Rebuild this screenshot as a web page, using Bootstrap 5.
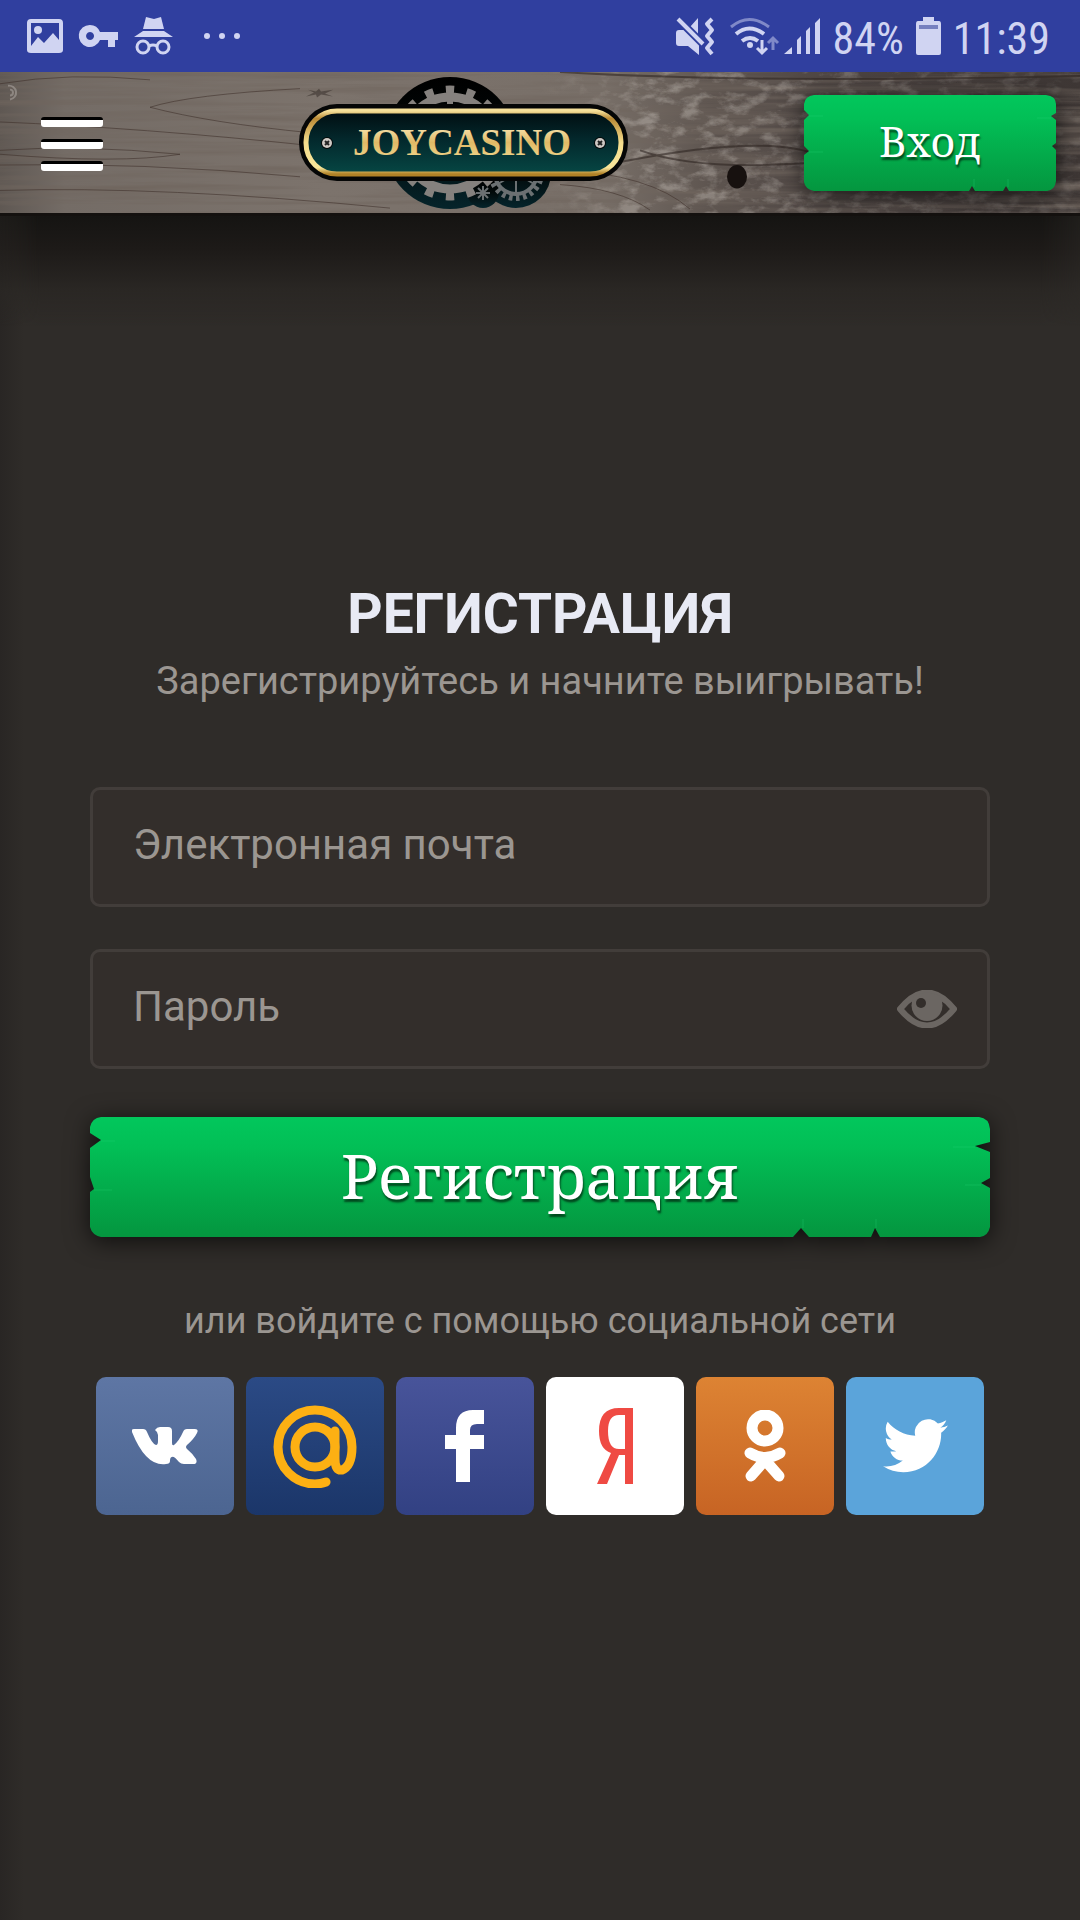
<!DOCTYPE html>
<html lang="ru">
<head>
<meta charset="utf-8">
<title>Joycasino</title>
<meta name="viewport" content="width=device-width, initial-scale=1">
<link rel="stylesheet" href="https://cdn.jsdelivr.net/npm/bootstrap@5.3.0/dist/css/bootstrap.min.css">
<script src="https://cdn.jsdelivr.net/npm/bootstrap@5.3.0/dist/js/bootstrap.bundle.min.js"></script>
<style>
body{background:linear-gradient(90deg,#292624 0,#2f2c29 24px);font-family:Roboto,"Noto Sans",sans-serif;color:#9b9691;min-height:100vh}
svg{display:block;flex:none}
.status-bar{background:#303f9f;height:72px;padding:0 30px 0 26px;color:#d0d4f2;font:44px/66px "Roboto Condensed",Roboto,sans-serif}
.status-right{gap:12px}
.status-text{padding-top:6px}
.top-bar{height:144px;padding:0 24px 0 41px;border-bottom:3px solid #14110f;isolation:isolate}
.wood{position:absolute;inset:0;width:100%;height:100%;z-index:-1}
.under-shade{height:110px;background:linear-gradient(#151412,#1d1a18 30%,#2a2724 68%,rgba(47,44,41,0));-webkit-mask-image:linear-gradient(90deg,rgba(0,0,0,.6),#000 40px calc(100% - 40px),rgba(0,0,0,.6))}
.menu-btn{width:82px;height:56px;border:0;background:none;padding:2px 0 0;display:flex;flex-direction:column;justify-content:space-between}
.menu-bar{width:62px;height:10px;border-top:3px solid #000;border-radius:3px;background:#fff}
.plank{display:block;position:relative;border:0;padding:0 0 4px;color:#fff;background:none;font-family:"Noto Serif","DejaVu Serif",serif;text-shadow:1px 3px 2px rgba(0,50,20,.8);isolation:isolate}
.plank svg{position:absolute;inset:0;width:100%;height:100%;z-index:-1;overflow:visible;filter:drop-shadow(0 4px 12px rgba(0,0,0,.7))}
.login-btn{width:252px;height:96px;font-size:42px}
.register-btn{height:120px;font-size:62px;margin-top:48px}
.reg-area{padding:255px 90px 0}
.reg-title{font-size:55px;line-height:66px;font-weight:700;color:#e8eaf4;margin:0}
.reg-sub{font-size:38px;line-height:48px;margin:10px 0 82px}
.field-wrap{position:relative;font-size:42px;line-height:56px}
.field-wrap + .field-wrap{margin-top:42px}
.field-box{height:120px;font-size:inherit;line-height:inherit;background:#332e2b;border:3px solid #423d3a;border-radius:10px;padding:0 40px;color:#c9c5c1}
.field-box:focus{background:#332e2b;color:#fff;border-color:#69635e;box-shadow:none}
.field-label{position:absolute;left:43px;top:30px;pointer-events:none}
.field-box:not(:placeholder-shown) + .field-label{display:none}
.eye-btn{position:absolute;right:33px;top:41px;border:0;background:none;padding:0}
.social-note{font-size:36px;line-height:48px;margin:60px 0 32px}
.social-row{gap:12px;padding:0 6px}
.social-tile{flex:1;aspect-ratio:1;border-radius:10px;display:flex;align-items:center;justify-content:center}
.tile-vk{background:linear-gradient(#5e76a4,#4c6591)}
.tile-mail{background:linear-gradient(#2b4a85,#1b3669)}
.tile-fb{background:linear-gradient(#48549a,#324183)}
.tile-ya{background:#fff}
.tile-ok{background:linear-gradient(#dd8333,#c76424)}
.tile-tw{background:#5ba4da}
</style>
</head>
<body>
<div class="status-bar d-flex align-items-center justify-content-between">
  <svg width="216" height="42" viewBox="0 0 216 42" fill="#d0d4f2" aria-hidden="true">
    <path fill-rule="evenodd" d="M5 4h28q4 0 4 4v27q0 3-4 3H5q-4 0-4-3V8q0-4 4-4zM5 8v23l7-9 6 6 9-10 6 7V8z"/>
    <circle cx="12" cy="15" r="4"/>
    <path fill-rule="evenodd" d="M64 10a11 11 0 0 1 10 7h18v8h-3v7h-7v-7h-8a11 11 0 1 1-10-15zm0 7a4 4 0 1 0 .1 0z"/>
    <path d="M120 2l8 2 7-2 3 12h-21zM117 16h21l9 6h-39z"/>
    <g fill="none" stroke="#d0d4f2" stroke-width="3"><circle cx="117" cy="32" r="6"/><circle cx="137" cy="32" r="6"/><path d="M123 31q4-2 8 0"/></g>
    <circle cx="181" cy="21" r="3"/><circle cx="196" cy="21" r="3"/><circle cx="211" cy="21" r="3"/>
  </svg>
  <div class="status-right d-flex align-items-center">
    <svg width="146" height="42" viewBox="0 0 146 42" aria-hidden="true" fill="#d0d4f2">
      <path d="M1 18q0-3 3-3h5L24 29v11l-11-9H4q-3 0-3-3zM23 3v17l-8-8z"/>
      <path d="M3 4l25 25" stroke="#303f9f" stroke-width="8"/>
      <path d="M3 4l25 25" stroke="#d0d4f2" stroke-width="4"/>
      <path d="M37 4L32 9l5 6-5 6 5 6-5 6 5 6" fill="none" stroke="#d0d4f2" stroke-width="4" stroke-linejoin="round"/>
      <g fill="none" stroke="#d0d4f2" stroke-width="4"><path d="M56 12q18-15 38 0" stroke-opacity=".5" stroke-width="3"/><path d="M61 19q13-11 28 0"/><path d="M67 26q8-6 16 0"/></g>
      <circle cx="75" cy="30" r="3"/>
      <path d="M87 25v13M82 33l5 5 5-5" fill="none" stroke="#d0d4f2" stroke-width="3"/>
      <path d="M98 35V23M93 28l5-5 5 5" fill="none" stroke="#d0d4f2" stroke-opacity=".5" stroke-width="3"/>
      <path d="M109 39l8-7v7zM122 39V25l4-4v18zM131 39V16l4-4v27zM140 39V8l5-5v36z"/>
    </svg>
    <span class="status-text">84%</span>
    <svg width="25" height="38" viewBox="0 0 25 38" aria-hidden="true"><path fill="#d0d4f2" d="M7 0h11v4h5q2 0 2 3v29q0 2-2 2H2q-2 0-2-2V7q0-3 2-3h5z"/><path fill="#7680bf" d="M3 8h19v4H3z"/></svg>
    <span class="status-text">11:39</span>
  </div>
</div>

<header class="top-bar position-relative d-flex align-items-center justify-content-between">
  <svg class="wood" viewBox="0 0 1080 144" preserveAspectRatio="none" aria-hidden="true">
    <defs>
      <linearGradient id="tone"><stop offset="0" stop-color="#5f5853"/><stop offset=".06" stop-color="#746c66"/><stop offset=".3" stop-color="#7c736c"/><stop offset=".56" stop-color="#786f68"/><stop offset=".66" stop-color="#5d544f"/><stop offset=".8" stop-color="#4a4240"/><stop offset="1" stop-color="#3e3735"/></linearGradient>
      <linearGradient id="wearFade"><stop offset=".5" stop-color="#000"/><stop offset=".6" stop-color="#fff"/><stop offset=".75" stop-color="#bbb"/><stop offset="1" stop-color="#555"/></linearGradient>
      <mask id="wearMask"><rect width="1080" height="144" fill="url(#wearFade)"/></mask>
      <filter id="grain" x="0" y="0" width="100%" height="100%"><feTurbulence type="fractalNoise" baseFrequency=".005 .14" numOctaves="4" seed="8"/><feColorMatrix values="0 0 0 0 .16  0 0 0 0 .13  0 0 0 0 .11  1.8 0 0 0 -.72"/></filter>
      <filter id="wear" x="0" y="0" width="100%" height="100%"><feTurbulence type="fractalNoise" baseFrequency=".05 .09" numOctaves="5" seed="5"/><feColorMatrix values="0 0 0 0 .55  0 0 0 0 .51  0 0 0 0 .47  3.4 0 0 0 -1.6"/></filter>
    </defs>
    <rect width="1080" height="144" fill="url(#tone)"/>
    <rect width="1080" height="144" filter="url(#grain)"/>
    <g mask="url(#wearMask)"><rect width="1080" height="144" filter="url(#wear)" opacity=".45"/></g>
    <g fill="none" stroke="#3b2d27" stroke-opacity=".55" stroke-width="1">
      <path d="M0 12q70-12 150-4M300 17q-110 6-150 19 60 16 160 26M0 51q140 6 310 24M0 80q80-6 180 4-60 10-180 0M0 95q140-3 300 12M0 121q160-5 390 18M560 100q90 4 130 40M560 115q60 4 90 26"/>
      <path d="M620 92q150-30 200-6M640 80q60 22 180 12M560 0q200 12 520 4" stroke="#2a211e" stroke-width="2"/>
    </g>
    <path d="M308 18l8 2 3-3 2 3 12-2-8 4 8 3-12-2-4 3-1-3-10 2 8-4z" fill="#2f2824" opacity=".5"/>
    <path d="M8 14a7 7 0 1 1 2 14M10 18a3 3 0 1 1 0 6" fill="none" stroke="#b5b0ac" stroke-opacity=".5" stroke-width="2"/>
    <ellipse cx="737" cy="107" rx="10" ry="12" fill="#17110f"/>
  </svg>

  <button class="menu-btn" type="button" aria-label="Меню"><span class="menu-bar"></span><span class="menu-bar"></span><span class="menu-bar"></span></button>

  <a href="#" aria-label="Joycasino">
    <svg width="330" height="134" viewBox="0 0 330 134">
      <defs>
        <linearGradient id="dark" x2="0" y2="1"><stop offset="0" stop-color="#000"/><stop offset=".5" stop-color="#020909"/><stop offset="1" stop-color="#05242b"/></linearGradient>
        <linearGradient id="teal" x2="0" y2="1"><stop offset="0" stop-color="#010d10"/><stop offset=".45" stop-color="#03282c"/><stop offset="1" stop-color="#064744"/></linearGradient>
        <linearGradient id="gold" x2="0" y2="1"><stop offset="0" stop-color="#f6e09a"/><stop offset=".12" stop-color="#b98a35"/><stop offset=".5" stop-color="#f5dd8d"/><stop offset=".9" stop-color="#f8e69a"/><stop offset="1" stop-color="#b08126"/></linearGradient>
        <linearGradient id="letter" x2="0" y2="1"><stop offset="0" stop-color="#fff0c4"/><stop offset=".5" stop-color="#e0b966"/><stop offset="1" stop-color="#f3dc94"/></linearGradient>
      </defs>
      <g fill="url(#dark)"><circle cx="151" cy="67" r="66"/><circle cx="217" cy="97" r="35"/><circle cx="184" cy="116" r="16"/></g>
      <g fill="none" stroke="#85817e">
        <circle cx="151" cy="67" r="46" stroke-width="9"/>
        <circle cx="151" cy="67" r="53" stroke-width="9" pathLength="320" stroke-dasharray="8 12" stroke-dashoffset="4"/>
        <path d="M151 20v20" stroke-width="6"/>
      </g>
      <g fill="none" stroke="#6b7072">
        <circle cx="217" cy="97" r="21" stroke-width="4"/>
        <circle cx="217" cy="97" r="25" stroke-width="6" pathLength="44" stroke-dasharray="1 1"/>
        <path d="M217 76v42M199 86l36 22M199 108l36-22" stroke-width="2"/>
        <path d="M184 110v14M177 117h14M179 112l10 10M179 122l10-10" stroke-width="2"/>
      </g>
      <rect y="28" width="329" height="77" rx="38" fill="#050606"/>
      <rect x="7" y="35" width="315" height="63" rx="31" fill="url(#teal)" stroke="url(#gold)" stroke-width="5"/>
      <g><circle cx="28" cy="67" r="6" fill="#04090a"/><circle cx="28" cy="67" r="5" fill="#cfc9c4"/><path d="M26 65l4 4m0-4l-4 4" stroke="#222" stroke-width="2"/><circle cx="301" cy="67" r="6" fill="#04090a"/><circle cx="301" cy="67" r="5" fill="#cfc9c4"/><path d="M299 65l4 4m0-4l-4 4" stroke="#222" stroke-width="2"/></g>
      <text x="163" y="79" text-anchor="middle" font-family="Liberation Serif, serif" font-weight="700" font-size="37" fill="url(#letter)">JOYCASINO</text>
    </svg>
  </a>

  <button class="plank login-btn" type="button">
    <svg viewBox="0 0 252 96" preserveAspectRatio="none" aria-hidden="true">
      <defs><linearGradient id="leaf" x2="0" y2="1"><stop offset="0" stop-color="#02c75c"/><stop offset=".25" stop-color="#02bf56"/><stop offset="1" stop-color="#04963f"/></linearGradient></defs>
      <path fill="url(#leaf)" d="M10 0H242q10 1 10 9V18l-5 3 5 4V48l-4 3 4 4V86q-1 9-9 10H205l-3-5-3 5H171l-3-5-3 5H10Q1 94 0 87V60l5-4-5-5V25l5-5-5-5V9Q1 1 10 0z"/>
      <path fill="none" stroke="#2ad67a" stroke-opacity=".3" stroke-width="1" d="M5 21h14M5 57h14M247 23h-14M170 92V84M204 92V84"/>
    </svg>
    Вход
  </button>
</header>
<div class="under-shade"></div>

<main class="reg-area">
  <h1 class="reg-title text-center">РЕГИСТРАЦИЯ</h1>
  <p class="reg-sub text-center">Зарегистрируйтесь и начните выигрывать!</p>
  <form>
    <div class="field-wrap">
      <input class="form-control field-box" id="email" type="email" placeholder=" ">
      <label class="field-label" for="email">Электронная почта</label>
    </div>
    <div class="field-wrap">
      <input class="form-control field-box" id="pass" type="password" placeholder=" ">
      <label class="field-label" for="pass">Пароль</label>
      <button class="eye-btn" type="button" aria-label="Показать пароль">
        <svg width="60" height="38" viewBox="0 0 60 38"><path d="M3 19Q30-14 57 19 30 52 3 19z" fill="none" stroke="#6b6662" stroke-width="6" stroke-linejoin="round"/><path fill="#6b6662" d="M17 6q13-7 26 0 5 10 0 18-5 7-13 7t-13-7q-5-8 0-18z"/><circle cx="24" cy="13" r="5" fill="#332e2b"/></svg>
      </button>
    </div>
    <button class="plank register-btn w-100" type="submit">
      <svg viewBox="0 0 900 120" preserveAspectRatio="none" aria-hidden="true">
        <path fill="url(#leaf)" d="M11 0H889q10 1 11 12V25l-15 4 15 6V61l-9 5 9 5V110q-2 9-10 10H790l-5-9-4 9H719l-8-9-8 9H11Q2 118 0 110V75l4-3-4-12V31l11-8-11-7V10Q2 1 11 0z"/>
        <path fill="none" stroke="#2ad67a" stroke-opacity=".3" stroke-width="1" d="M11 24h14M4 73h18M885 30h-22M891 68h-16M713 111v-9M786 111v-9"/>
      </svg>
      Регистрация
    </button>
  </form>
  <p class="social-note text-center">или войдите с помощью социальной сети</p>
  <div class="social-row d-flex">
    <a class="social-tile tile-vk" href="#" aria-label="ВКонтакте"><svg width="66" height="38" viewBox="0 0 66 38"><path fill="#fff" d="M2 2h9q3 0 4 3 5 12 9 13 2 0 2-4V8q0-3-3-5 2-3 5-3h8q4 0 4 4v12q0 3 2 2 5-4 9-13 1-3 4-3h8q4 0 2 4-3 6-10 12-2 2 0 4 6 5 9 10 2 5-3 5h-9q-3 0-5-2-5-6-7-5-2 0-2 4 0 3-4 3Q14 40 0 5q-1-3 2-3z"/></svg></a>
    <a class="social-tile tile-mail" href="#" aria-label="Mail.ru"><svg width="84" height="84" viewBox="0 0 84 84" fill="none" stroke="#fdb013" stroke-width="9" stroke-linecap="round"><circle cx="42" cy="43" r="20"/><path d="M62 27v28q0 12 7 11 10-4 10-23a37 37 0 1 0-37 37q6 0 11-2"/></svg></a>
    <a class="social-tile tile-fb" href="#" aria-label="Facebook"><svg width="40" height="72" viewBox="0 0 40 72"><path fill="#fff" d="M11 72V39H0V25h11V18Q11 0 28 0h11v14h-7q-7 0-7 6v5h14v14H25v33z"/></svg></a>
    <a class="social-tile tile-ya" href="#" aria-label="Яндекс"><svg width="36" height="76" viewBox="0 0 36 76"><path fill="#ef4a43" fill-rule="evenodd" d="M36 0v76h-8V47h-6L10 76H0l14-31Q2 41 2 23 2 0 22 0zM28 7h-6q-11 0-11 16 0 18 11 18h6z"/></svg></a>
    <a class="social-tile tile-ok" href="#" aria-label="Одноклассники"><svg width="42" height="72" viewBox="0 0 42 72" fill="none" stroke="#fff" stroke-width="11" stroke-linecap="round"><circle cx="21" cy="18" r="13"/><path d="M6 43q15 9 30 0M21 50L7 66M21 50l14 16"/></svg></a>
    <a class="social-tile tile-tw" href="#" aria-label="Twitter"><svg width="65" height="54" viewBox="0 0 24 20"><path fill="#fff" d="M24 2.400c-.9.400-1.800.700-2.800.800 1-.600 1.800-1.600 2.200-2.700-1 .600-2 1-3.100 1.200A4.900 4.900 0 0 0 11.900 6.200C7.700 6 4.100 4 1.700 1a4.900 4.900 0 0 0 1.500 6.600c-.800 0-1.600-.200-2.200-.600v.1c0 2.400 1.700 4.400 3.900 4.800-.7.200-1.500.2-2.200.1.600 2 2.400 3.400 4.600 3.400A9.900 9.900 0 0 1 0 17.500 13.900 13.900 0 0 0 7.500 19.700c9.100 0 14.300-7.700 14-14.600 1-.700 1.800-1.600 2.500-2.700z"/></svg></a>
  </div>
</main>
</body>
</html>
